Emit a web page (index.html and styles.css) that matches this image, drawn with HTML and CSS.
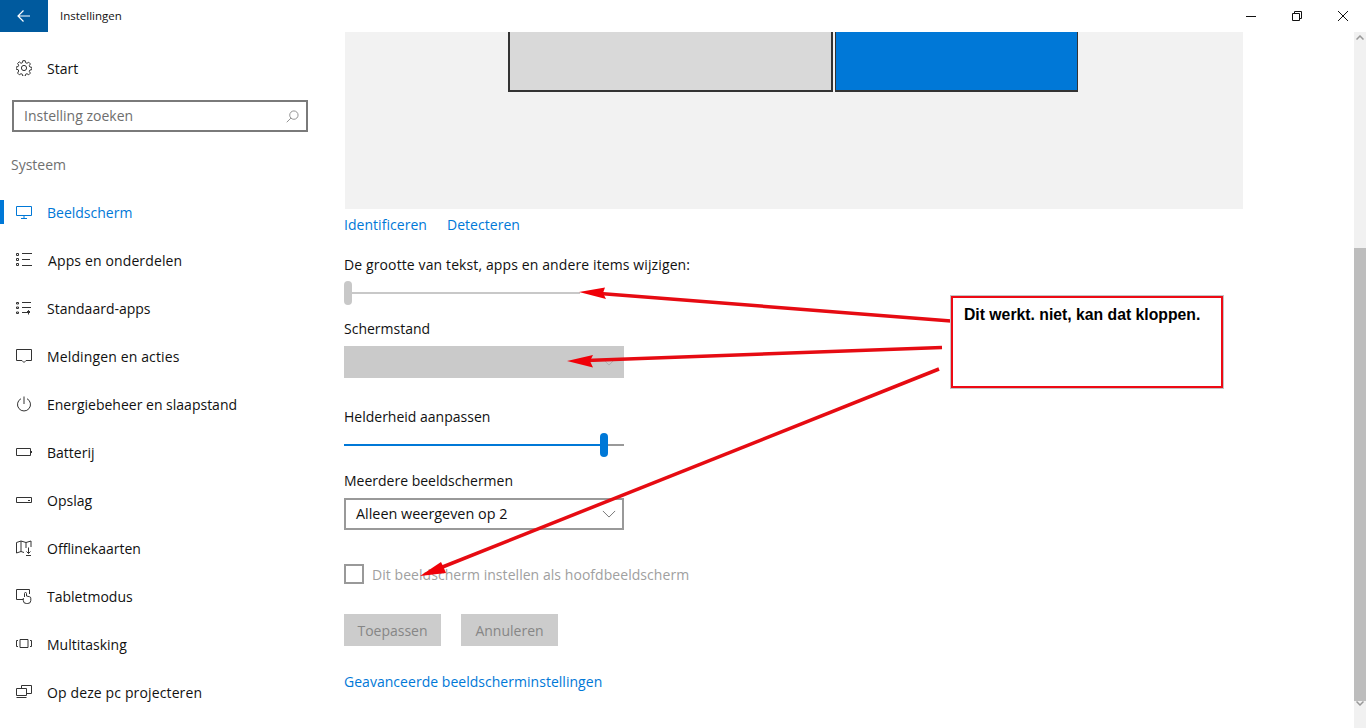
FILE: index.html
```html
<!DOCTYPE html>
<html lang="nl">
<head>
<meta charset="utf-8">
<title>Instellingen</title>
<link rel="stylesheet" href="styles.css">
</head>
<body>
<div class="app">
  <header class="titlebar">
    <div class="back"><svg class="ic-back" viewBox="0 0 14 14"><path d="M13 7H1.500M6.500 1.500 1 7l5.500 5.500"/></svg></div>
    <div class="title">Instellingen</div>
    <div class="winctl">
      <svg class="wc" viewBox="0 0 12 12"><path d="M1 6.500h10"/></svg>
      <svg class="wc" viewBox="0 0 12 12"><path d="M1.500 3.500h7v7h-7zM3.500 3.500v-2h7v7h-2"/></svg>
      <svg class="wc" viewBox="0 0 12 12"><path d="M1 1l10 10M11 1 1 11"/></svg>
    </div>
  </header>
  <div class="body">
    <aside class="side">
      <div class="row home"><span class="mark"></span>
        <svg class="ic" viewBox="0 0 16 16"><path d="M6.800.7h2.400l.4 2 1.400.6 1.700-1.100 1.700 1.700-1.100 1.700.6 1.400 2 .4v2.200l-2 .4-.6 1.400 1.100 1.700-1.700 1.700-1.700-1.100-1.400.6-.4 2H6.800l-.4-2-1.400-.6-1.700 1.100-1.700-1.700L2.700 11 2.100 9.600l-2-.4V7l2-.4.600-1.400-1.100-1.700 1.700-1.700L5 3.300l1.400-.6z"/><circle cx="8" cy="8" r="2.600"/></svg>
        <span>Start</span></div>
      <div class="search"><span>Instelling zoeken</span>
        <svg class="ic-search" viewBox="0 0 14 14"><circle cx="8.500" cy="5.500" r="4.500"/><path d="M5.300 8.700.8 13.200"/></svg></div>
      <div class="group">Systeem</div>
      <nav>
        <div class="row active"><span class="mark"></span>
          <svg class="ic" viewBox="0 0 16 16"><path d="M.5 2.500h15v9H.5zM5 14.500h6M8 11.500v3"/></svg><span>Beeldscherm</span></div>
        <div class="row"><span class="mark"></span>
          <svg class="ic" viewBox="0 0 16 16"><path d="M.5 1.500h2v2h-2zM.5 6.500h2v2h-2zM.5 11.500h2v2h-2zM6 1.500h10M6 7.500h8M6 13.500h10"/></svg><span class="wide apps">Apps en onderdelen</span></div>
        <div class="row"><span class="mark"></span>
          <svg class="ic" viewBox="0 0 16 16"><path d="M.5 2.500h2v1.500h-2zM.5 7h2v1.500h-2zM.5 12h2v1.500h-2zM6 2.500h9M6 7.500h9M6 12.500h8M12.500 14.500v-4M11 12l1.500-1.500L14 12"/></svg><span>Standaard-apps</span></div>
        <div class="row"><span class="mark"></span>
          <svg class="ic" viewBox="0 0 16 16"><path d="M.5 1.500h15v11H10L8 14.500 6 12.500H.5z"/></svg><span class="wide">Meldingen en acties</span></div>
        <div class="row"><span class="mark"></span>
          <svg class="ic" viewBox="0 0 16 16"><path d="M5 2.700a6.500 6.500 0 1 0 6 0M8 .5v7.500"/></svg><span>Energiebeheer en slaapstand</span></div>
        <div class="row"><span class="mark"></span>
          <svg class="ic" viewBox="0 0 16 16"><path d="M.5 4.500h14v7H.5zM15.500 7v2"/></svg><span>Batterij</span></div>
        <div class="row"><span class="mark"></span>
          <svg class="ic" viewBox="0 0 16 16"><path d="M.5 5.500h15v5H.5zM12 8.500h2"/></svg><span>Opslag</span></div>
        <div class="row"><span class="mark"></span>
          <svg class="ic" viewBox="0 0 16 16"><path d="M.5 13V2.500L5 1l5 1.500L15 1v6M.5 13 5 11.500l3 1M5 1v10.500M10 2.500V8M12.500 7.500v6M10.500 11.500l2 2 2-2M10 15.500h5"/></svg><span>Offlinekaarten</span></div>
        <div class="row"><span class="mark"></span>
          <svg class="ic" viewBox="0 0 16 16"><path d="M7 11.500H.5v-10h13V6M8.500 9V5.500a1 1 0 0 1 2 0V8l3 .7a1.500 1.500 0 0 1 1.300 1.500v2.300a3 3 0 0 1-3 3h-1.500a3 3 0 0 1-3-3V10"/></svg><span>Tabletmodus</span></div>
        <div class="row"><span class="mark"></span>
          <svg class="ic" viewBox="0 0 16 16"><path d="M4 3.500h8v8H4zM2 4.500H.5v6H2M14 4.500h1.500v6H14"/></svg><span>Multitasking</span></div>
        <div class="row"><span class="mark"></span>
          <svg class="ic" viewBox="0 0 16 16"><path d="M5.500 4.500v-3h10v8H11M.5 4.500h10v7H.5zM.5 13.500h10"/></svg><span class="wide">Op deze pc projecteren</span></div>
      </nav>
    </aside>
    <main class="content">
      <section class="preview">
        <div class="mon mon-a"></div>
        <div class="mon mon-b"></div>
      </section>
      <div class="links"><a>Identificeren</a><a>Detecteren</a></div>
      <div class="label l-size">De grootte van tekst, apps en andere items wijzigen:</div>
      <div class="slider s-size"><span class="thumb t-off"></span><span class="track t-grey"></span></div>
      <div class="label l-orient">Schermstand</div>
      <div class="select disabled"><svg class="chev" viewBox="0 0 16 9"><path d="M1 1l7 7 7-7"/></svg></div>
      <div class="label l-bright">Helderheid aanpassen</div>
      <div class="slider s-bright"><span class="track t-blue"></span><span class="thumb t-on"></span><span class="track t-rest"></span></div>
      <div class="label l-multi">Meerdere beeldschermen</div>
      <div class="select normal"><span>Alleen weergeven op 2</span><svg class="chev" viewBox="0 0 16 9"><path d="M1 1l7 7 7-7"/></svg></div>
      <div class="check"><span class="box"></span><span class="check-text">Dit beeldscherm instellen als hoofdbeeldscherm</span></div>
      <div class="buttons"><div class="btn">Toepassen</div><div class="btn">Annuleren</div></div>
      <a class="adv">Geavanceerde beeldscherminstellingen</a>
    </main>
    <div class="scrollbar">
      <svg class="sb-arrow" viewBox="0 0 8 5"><path d="M.5 4.500 4 1l3.500 3.500"/></svg>
      <div class="sb-space"></div>
      <div class="sb-thumb"></div>
      <svg class="sb-arrow" viewBox="0 0 8 5"><path d="M.5.5 4 4 7.500.5"/></svg>
    </div>
  </div>
  <svg class="arrows" viewBox="0 0 1366 728">
    <path d="M951 321 600 293.500"/>
    <polygon points="579,292 605,287.500 603,293 606,299"/>
    <path d="M942 347.500 586 360.500"/>
    <polygon points="567,361 593,355 590,361 593,367.500"/>
    <path d="M939 369 440 568"/>
    <polygon points="420,576 441,562 443,566 446,573"/>
  </svg>
  <div class="note">Dit werkt. niet, kan dat kloppen.</div>
</div>
</body>
</html>
```
FILE: styles.css
```css
* { box-sizing: border-box; }
html, body { margin: 0; height: 100%; background: #fff; overflow: hidden; }
body { font: 14px/20px "Open Sans", "Noto Sans", sans-serif; color: #111; }
a { color: #0078d7; }

.app { position: relative; width: 1366px; height: 728px; display: flex; flex-direction: column; }

.titlebar { height: 32px; display: flex; align-items: center; flex: none; }
.back { width: 48px; height: 32px; background: #005a9e; display: flex; align-items: center; justify-content: center; }
.ic-back { width: 14px; height: 14px; fill: none; stroke: #fff; stroke-width: 1.2; }
.title { font-size: 11.500px; margin-left: 12px; color: #111; }
.winctl { margin-left: auto; display: flex; }
.wc { width: 12px; height: 12px; margin: 0 17px; fill: none; stroke: #111; stroke-width: 1; }

.body { flex: 1; display: flex; min-height: 0; }
.side { width: 344px; flex: none; padding-top: 12px; }
.row { height: 48px; display: flex; align-items: center; color: #111; padding-top: 2px; }
.mark { width: 4px; height: 24px; margin-right: 12px; flex: none; }
.ic { width: 16px; height: 16px; margin-right: 15px; flex: none; fill: none; stroke: #333; stroke-width: 1; margin-top: -2px; }
.active { color: #0078d7; }
.active .mark { background: #0078d7; margin-top: -2px; }
.active .ic { stroke: #0078d7; }
.wide { letter-spacing: .13px; }
.apps { margin-left: 1px; }

.search { margin: 8px 0 0 12px; width: 296px; height: 32px; border: 2px solid #7a7a7a; display: flex; align-items: center; justify-content: space-between; padding: 0 7px 0 10px; color: #6e6e6e; }
.ic-search { width: 13px; height: 13px; fill: none; stroke: #8a8a8a; stroke-width: 1; }
.group { margin: 14px 0 4px 11px; height: 38px; line-height: 38px; color: #707070; }

.content { flex: 1; min-width: 0; }
.preview { margin-left: 1px; width: 898px; height: 177px; background: #f2f2f2; display: flex; padding-left: 163px; gap: 2px; }
.mon { height: 60px; border: 2px solid #333; border-top: 0; }
.mon-a { width: 325px; background: #d9d9d9; }
.mon-b { width: 243px; background: #0078d7; border-left-width: 1px; border-right-width: 1px; }

.links { height: 20px; margin-top: 6px; display: flex; gap: 20px; letter-spacing: .04px; }
.label { height: 20px; color: #111; }
.l-size { margin-top: 20px; letter-spacing: .115px; }
.slider { display: flex; align-items: center; height: 24px; }
.s-size { margin-top: 6px; }
.thumb { width: 8px; height: 24px; border-radius: 4px; flex: none; }
.track { height: 2px; display: block; }
.t-off { background: #c8c8c8; }
.t-grey { width: 228px; background: #c8c8c8; }
.l-orient { margin-top: 14px; }
.select { width: 280px; height: 32px; margin-top: 7px; display: flex; align-items: center; justify-content: space-between; padding: 0 8px 0 12px; }
.chev { width: 14px; height: 8px; fill: none; stroke: #666; stroke-width: 1; margin-left: auto; }
.disabled { background: #cacaca; }
.disabled .chev { stroke: #aaa; }
.l-bright { margin-top: 29px; }
.s-bright { margin-top: 6px; }
.t-blue { width: 256px; background: #0078d7; }
.t-on { background: #0078d7; }
.t-rest { width: 16px; background: #999; }
.l-multi { margin-top: 14px; }
.normal { border: 2px solid #999; padding: 0 6px 0 10px; font-size: 14.400px; color: #111; }
.check { display: flex; align-items: center; gap: 8px; margin-top: 34px; height: 20px; color: #a0a0a0; letter-spacing: .05px; }
.check-text { padding-top: 1px; }
.box { width: 20px; height: 20px; border: 2px solid #999; }
.buttons { display: flex; gap: 20px; margin-top: 30px; }
.btn { width: 97px; height: 32px; background: #ccc; color: #868686; display: flex; align-items: center; justify-content: center; padding-top: 1px; }
.adv { display: block; margin-top: 26px; height: 20px; letter-spacing: .03px; }

.scrollbar { width: 12px; flex: none; background: #f1f1f1; display: flex; flex-direction: column; align-items: center; padding: 3px 0; }
.sb-arrow { width: 8px; height: 5px; flex: none; fill: none; stroke: #999; stroke-width: 1.5; }
.sb-space { height: 208px; flex: none; }
.sb-thumb { width: 12px; height: 453px; background: #bdbdbd; flex: none; }

.arrows { position: absolute; left: 0; top: 0; width: 1366px; height: 728px; pointer-events: none; }
.arrows path { fill: none; stroke: #e60b12; stroke-width: 3.500; }
.arrows polygon { fill: #f00008; }
.note { position: absolute; left: 951px; top: 296px; width: 272px; height: 92px; background: #fff; border: 2px solid #ee0a14; outline: 1px solid #c4c4c4; padding: 7px 11px; font: bold 15.750px/20px "Liberation Sans", Arial, sans-serif; color: #000; }
```
